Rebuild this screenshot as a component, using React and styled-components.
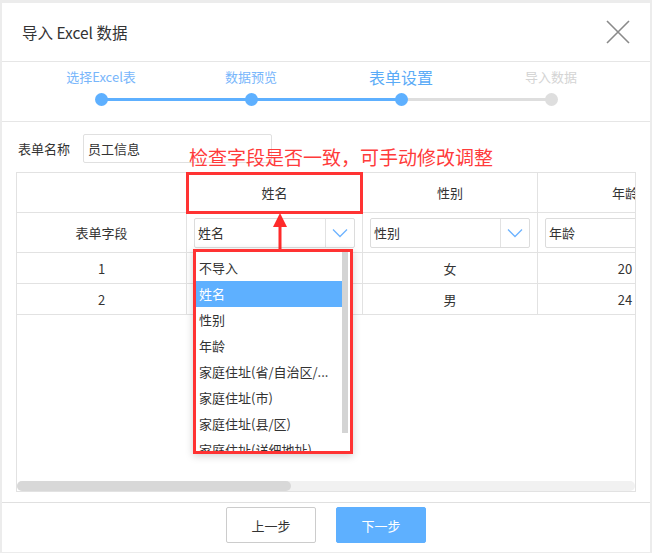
import React from 'react'
import styled, {createGlobalStyle} from 'styled-components'

const GlobalStyle = createGlobalStyle`
  html, body {
    margin: 0;
    padding: 0;
    background: #ececec;
  }
  * {
    box-sizing: border-box;
  }
`

const steps = ['选择Excel表', '数据预览', '表单设置', '导入数据']
const current = 2

const columns = [
    {title: '', width: 170},
    {title: '姓名', width: 176, field: '姓名'},
    {title: '性别', width: 175, field: '性别'},
    {title: '年龄', width: 175, field: '年龄'},
]

const rows = [
    ['1', '张三', '女', '20'],
    ['2', '李四', '男', '24'],
]

const options = [
    '不导入',
    '姓名',
    '性别',
    '年龄',
    '家庭住址(省/自治区/...',
    '家庭住址(市)',
    '家庭住址(县/区)',
    '家庭住址(详细地址)',
]

const Chevron = () => (
    <svg width="16" height="10" viewBox="0 0 16 10">
        <path d="M1 1.5 L8 8.5 L15 1.5" fill="none" stroke="#6db3ff" strokeWidth="1.3" />
    </svg>
)

const App = () => {
    return (
        <Page>
            <GlobalStyle />
            <Dialog>
                <Header>
                    <Title>导入 Excel 数据</Title>
                    <Close>
                        <svg width="24" height="24" viewBox="0 0 24 24">
                            <path d="M1 1 L23 23 M23 1 L1 23" stroke="#8a8a8a" strokeWidth="1.6" />
                        </svg>
                    </Close>
                </Header>

                <Steps>
                    {steps.map((label, i) => (
                        <Step key={label} done={i <= current} first={i === 0}>
                            <StepLabel state={i < current ? 'done' : i === current ? 'active' : 'todo'}>
                                {label}
                            </StepLabel>
                            <Dot done={i <= current} />
                        </Step>
                    ))}
                </Steps>

                <Body>
                    <FormRow>
                        <FormLabel>表单名称</FormLabel>
                        <NameInput>员工信息</NameInput>
                    </FormRow>

                    <TableWrap>
                        <GridArea>
                            <Grid>
                                {columns.map((c, i) => (
                                    <Cell key={'h' + i} w={c.width} h={40}>{c.title}</Cell>
                                ))}
                                {columns.map((c, i) => (
                                    <Cell key={'s' + i} w={c.width} h={40} pad>
                                        {i === 0 ? '表单字段' : (
                                            <Select>
                                                <SelectValue>{c.field}</SelectValue>
                                                <SelectArrow><Chevron /></SelectArrow>
                                            </Select>
                                        )}
                                    </Cell>
                                ))}
                                {rows.map((r, ri) => r.map((v, i) => (
                                    <Cell key={ri + '-' + i} w={columns[i].width} h={31}>{v}</Cell>
                                )))}
                            </Grid>
                        </GridArea>
                        <ScrollTrack>
                            <ScrollThumb />
                        </ScrollTrack>

                        <Note>检查字段是否一致，可手动修改调整</Note>
                        <HeaderMark />
                        <Arrow width="14" height="36" viewBox="0 0 14 36">
                            <polygon points="7,0 14,14 0,14" fill="#ff2a2a" />
                            <rect x="5.5" y="13" width="3" height="23" fill="#ff2a2a" />
                        </Arrow>
                        <Dropdown>
                            <OptionList>
                                {options.map((o) => (
                                    <Option key={o} selected={o === '姓名'}>{o}</Option>
                                ))}
                            </OptionList>
                            <VScroll />
                        </Dropdown>
                    </TableWrap>
                </Body>

                <Footer>
                    <Button>上一步</Button>
                    <Button primary>下一步</Button>
                </Footer>
            </Dialog>
        </Page>
    )
}

const Page = styled.div`
  width: 652px;
  height: 553px;
  padding: 3px 2px 1px 2px;
  background: #ececec;
  font-family: "Noto Sans CJK SC", "Noto Sans", sans-serif;
  color: #333;
`

const Dialog = styled.div`
  width: 648px;
  height: 549px;
  background: #fff;
  display: flex;
  flex-direction: column;
`

const Header = styled.div`
  height: 59px;
  flex-shrink: 0;
  display: flex;
  align-items: center;
  justify-content: space-between;
  padding: 0 20px 0 20px;
  border-bottom: 1px solid #e6e6e6;
`

const Title = styled.div`
  font-size: 15.5px;
  color: #333;
`

const Close = styled.div`
  width: 24px;
  height: 24px;
  display: flex;
  cursor: pointer;
`

const Steps = styled.div`
  height: 60px;
  flex-shrink: 0;
  display: flex;
  padding: 5px 0 0 24px;
  border-bottom: 1px solid #e6e6e6;
`

const Step = styled.div`
  width: 150px;
  display: flex;
  flex-direction: column;
  align-items: center;
  position: relative;

  &::before {
    content: '';
    display: ${props => (props.first ? 'none' : 'block')};
    position: absolute;
    left: -75px;
    width: 150px;
    top: 31px;
    height: 3px;
    background: ${props => (props.done ? '#5eb0ff' : '#dedede')};
  }
`

const StepLabel = styled.div`
  height: 20px;
  line-height: 20px;
  font-size: ${props => (props.state === 'active' ? '16px' : '13px')};
  color: ${props => (props.state === 'todo' ? '#d4d4d4' : props.state === 'active' ? '#5aabf7' : '#78b6fb')};
  white-space: nowrap;
`

const Dot = styled.div`
  width: 13px;
  height: 13px;
  margin-top: 6px;
  border-radius: 50%;
  background: ${props => (props.done ? '#5eb0ff' : '#dedede')};
  position: relative;
  z-index: 1;
`

const Body = styled.div`
  flex: 1;
  padding: 12px 14px 10px 14px;
  border-bottom: 1px solid #e0e0e0;
  display: flex;
  flex-direction: column;
`

const FormRow = styled.div`
  display: flex;
  align-items: center;
  height: 29px;
  margin-bottom: 9px;
`

const FormLabel = styled.div`
  width: 67px;
  padding-left: 2px;
  font-size: 13px;
  color: #333;
`

const NameInput = styled.div`
  width: 189px;
  height: 29px;
  border: 1px solid #e0e0e0;
  border-radius: 2px;
  padding-left: 4px;
  font-size: 13px;
  line-height: 27px;
  color: #333;
`

const TableWrap = styled.div`
  position: relative;
  width: 620px;
  height: 320px;
  border: 1px solid #e2e2e2;
  display: flex;
  flex-direction: column;
`

const GridArea = styled.div`
  flex: 1;
  overflow: hidden;
`

const Grid = styled.div`
  display: grid;
  grid-template-columns: 170px 176px 175px 175px;
  width: 696px;
`

const Cell = styled.div`
  height: ${props => props.h}px;
  border-right: 1px solid #e2e2e2;
  border-bottom: 1px solid #e2e2e2;
  display: flex;
  align-items: center;
  justify-content: center;
  padding: ${props => (props.pad ? '0 7px' : '0')};
  font-size: 13px;
  color: #333;
  white-space: nowrap;
`

const Select = styled.div`
  width: 100%;
  height: 30px;
  border: 1px solid #dcdcdc;
  border-radius: 2px;
  display: flex;
  align-items: center;
  background: #fff;
`

const SelectValue = styled.div`
  flex: 1;
  padding-left: 3px;
  font-size: 13px;
  color: #333;
`

const SelectArrow = styled.div`
  width: 29px;
  height: 100%;
  border-left: 1px solid #e2e2e2;
  display: flex;
  align-items: center;
  justify-content: center;
`

const ScrollTrack = styled.div`
  height: 10px;
  background: #f1f1f1;
  border-radius: 5px;
  flex-shrink: 0;
`

const ScrollThumb = styled.div`
  width: 274px;
  height: 10px;
  border-radius: 5px;
  background: #d8d8d8;
`

const Note = styled.div`
  position: absolute;
  left: 172px;
  top: -28px;
  font-size: 19px;
  line-height: 24px;
  color: #ff3b3b;
  white-space: nowrap;
`

const HeaderMark = styled.div`
  position: absolute;
  left: 169px;
  top: -1px;
  width: 177px;
  height: 42px;
  border: 3px solid #ff3333;
`

const Arrow = styled.svg`
  position: absolute;
  left: 256px;
  top: 40px;
`

const Dropdown = styled.div`
  position: absolute;
  left: 176px;
  top: 76px;
  width: 160px;
  height: 205px;
  border: 3px solid #ff3333;
  background: #fff;
  box-shadow: 0 2px 8px rgba(0, 0, 0, 0.18);
  overflow: hidden;
  display: flex;
`

const OptionList = styled.div`
  flex: 1;
  padding-top: 3px;
  overflow: hidden;
`

const Option = styled.div`
  height: 26px;
  line-height: 26px;
  padding-left: 3px;
  font-size: 13px;
  white-space: nowrap;
  background: ${props => (props.selected ? '#5eb0ff' : '#fff')};
  color: ${props => (props.selected ? '#fff' : '#333')};
`

const VScroll = styled.div`
  width: 6px;
  height: 181px;
  margin-right: 2px;
  background: #d4d4d4;
  flex-shrink: 0;
`

const Footer = styled.div`
  flex: 1;
  display: flex;
  justify-content: center;
  align-items: flex-start;
  gap: 20px;
  padding-top: 4px;
`

const Button = styled.button`
  width: 90px;
  height: 36px;
  border: 1px solid ${props => (props.primary ? '#5eb0ff' : '#cccccc')};
  border-radius: 2px;
  background: ${props => (props.primary ? '#5eb0ff' : '#fff')};
  color: ${props => (props.primary ? '#fff' : '#333')};
  font-family: "Noto Sans CJK SC", sans-serif;
  font-size: 13px;
  cursor: pointer;
`

export default App
